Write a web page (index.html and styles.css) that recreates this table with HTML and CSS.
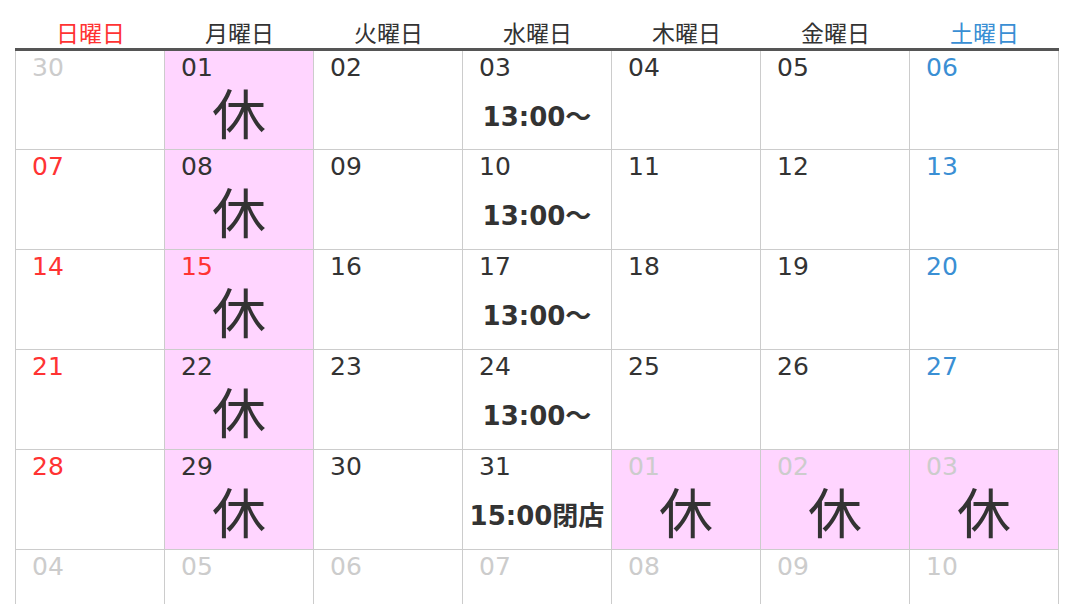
FILE: index.html
```html
<!DOCTYPE html>
<html lang="ja">
<head>
<meta charset="utf-8">
<link rel="stylesheet" href="styles.css">
</head>
<body>
<div class="cal">
  <div class="head">
    <div class="wd sun">日曜日</div>
    <div class="wd">月曜日</div>
    <div class="wd">火曜日</div>
    <div class="wd">水曜日</div>
    <div class="wd">木曜日</div>
    <div class="wd">金曜日</div>
    <div class="wd sat">土曜日</div>
  </div>
  <div class="grid">
    <div class="cell"><span class="num other">30</span></div>
    <div class="cell off"><span class="num">01</span><span class="kyu">休</span></div>
    <div class="cell"><span class="num">02</span></div>
    <div class="cell"><span class="num">03</span><span class="note">13:00〜</span></div>
    <div class="cell"><span class="num">04</span></div>
    <div class="cell"><span class="num">05</span></div>
    <div class="cell"><span class="num sat">06</span></div>

    <div class="cell"><span class="num sun">07</span></div>
    <div class="cell off"><span class="num">08</span><span class="kyu">休</span></div>
    <div class="cell"><span class="num">09</span></div>
    <div class="cell"><span class="num">10</span><span class="note">13:00〜</span></div>
    <div class="cell"><span class="num">11</span></div>
    <div class="cell"><span class="num">12</span></div>
    <div class="cell"><span class="num sat">13</span></div>

    <div class="cell"><span class="num sun">14</span></div>
    <div class="cell off"><span class="num sun">15</span><span class="kyu">休</span></div>
    <div class="cell"><span class="num">16</span></div>
    <div class="cell"><span class="num">17</span><span class="note">13:00〜</span></div>
    <div class="cell"><span class="num">18</span></div>
    <div class="cell"><span class="num">19</span></div>
    <div class="cell"><span class="num sat">20</span></div>

    <div class="cell"><span class="num sun">21</span></div>
    <div class="cell off"><span class="num">22</span><span class="kyu">休</span></div>
    <div class="cell"><span class="num">23</span></div>
    <div class="cell"><span class="num">24</span><span class="note">13:00〜</span></div>
    <div class="cell"><span class="num">25</span></div>
    <div class="cell"><span class="num">26</span></div>
    <div class="cell"><span class="num sat">27</span></div>

    <div class="cell"><span class="num sun">28</span></div>
    <div class="cell off"><span class="num">29</span><span class="kyu">休</span></div>
    <div class="cell"><span class="num">30</span></div>
    <div class="cell"><span class="num">31</span><span class="note">15:00閉店</span></div>
    <div class="cell off"><span class="num other">01</span><span class="kyu">休</span></div>
    <div class="cell off"><span class="num other">02</span><span class="kyu">休</span></div>
    <div class="cell off"><span class="num other">03</span><span class="kyu">休</span></div>

    <div class="cell"><span class="num other">04</span></div>
    <div class="cell"><span class="num other">05</span></div>
    <div class="cell"><span class="num other">06</span></div>
    <div class="cell"><span class="num other">07</span></div>
    <div class="cell"><span class="num other">08</span></div>
    <div class="cell"><span class="num other">09</span></div>
    <div class="cell"><span class="num other">10</span></div>
  </div>
</div>
</body>
</html>
```
FILE: styles.css
```css
html, body {
  margin: 0;
  padding: 0;
  background: #fff;
  overflow: hidden;
}
body {
  font-family: "DejaVu Sans", "Noto Sans CJK JP", sans-serif;
  color: #333;
}
.cal {
  margin-left: 15px;
  width: 1044px;
}
.head {
  display: grid;
  grid-template-columns: repeat(7, 149px);
  border-bottom: 3px solid #555;
  padding-left: 1px;
  box-sizing: border-box;
  height: 51px;
}
.wd {
  font-family: "Noto Sans CJK JP", sans-serif;
  font-size: 23px;
  line-height: 32px;
  padding-top: 16px;
  text-align: center;
  color: #333;
}
.wd.sun { color: #ff3333; }
.wd.sat { color: #3a8fd4; }
.grid {
  display: grid;
  grid-template-columns: repeat(7, 149px);
  grid-template-rows: 99px repeat(5, 100px);
  border-left: 1px solid #ccc;
}
.cell {
  border-right: 1px solid #ccc;
  border-bottom: 1px solid #ccc;
  display: flex;
  flex-direction: column;
  align-items: stretch;
  padding: 2px 0 0 16px;
  box-sizing: border-box;
  background: #fff;
}
.cell.off { background: #ffd5ff; }
.num {
  font-size: 25px;
  line-height: 29px;
  color: #333;
}
.num.sun { color: #ff3333; }
.num.sat { color: #3a8fd4; }
.num.other { color: #cccccc; }
.kyu {
  font-family: "Noto Sans CJK JP", sans-serif;
  font-size: 54px;
  line-height: 60px;
  margin-left: -16px;
  text-align: center;
}
.note {
  font-family: "DejaVu Sans", "Noto Sans CJK JP", sans-serif;
  font-weight: bold;
  font-size: 26px;
  line-height: 36px;
  margin-top: 17px;
  margin-left: -16px;
  text-align: center;
  white-space: nowrap;
}
```
